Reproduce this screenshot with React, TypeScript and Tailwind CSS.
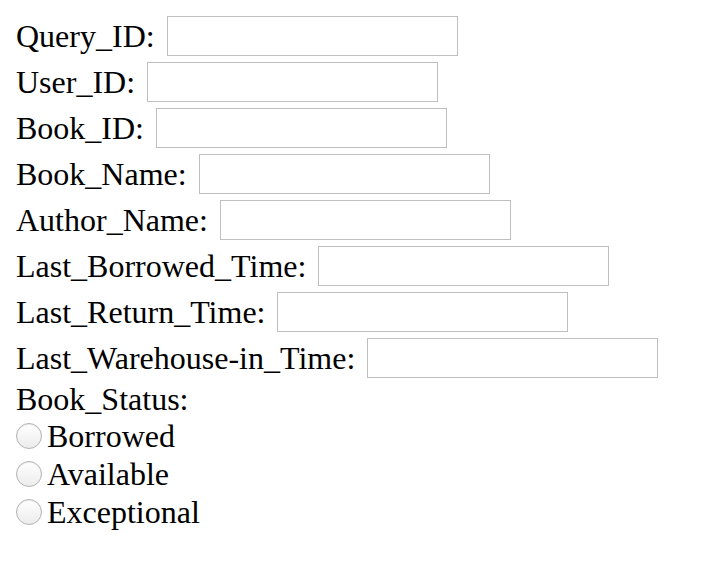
import React from "react"

const fields = [
  "Query_ID:",
  "User_ID:",
  "Book_ID:",
  "Book_Name:",
  "Author_Name:",
  "Last_Borrowed_Time:",
  "Last_Return_Time:",
  "Last_Warehouse-in_Time:",
]

const statuses = ["Borrowed", "Available", "Exceptional"]

export default function App() {
  return (
    <div
      className="min-h-[564px] bg-white pl-[16px] pt-[16px] text-[32px] leading-[36px] text-black"
      style={{ fontFamily: '"Liberation Serif", "Times New Roman", serif' }}
    >
      <form className="flex flex-col">
        {fields.map((f) => (
          <div key={f} className="mb-[6px] flex items-center">
            <label className="whitespace-nowrap">{f}</label>
            <input
              type="text"
              className="ml-[12px] h-[40px] w-[291px] border border-[#bfbfbf] bg-white outline-none"
            />
          </div>
        ))}
        <div className="-mt-[3px]">Book_Status:</div>
        <div className="flex flex-col">
          {statuses.map((s) => (
            <label key={s} className="flex h-[38px] items-center">
              <span className="mr-[5px] inline-block h-[26px] w-[26px] rounded-full border border-[#b3b3b3] bg-gradient-to-b from-[#ffffff] to-[#ececec] shadow-[inset_0_1px_1px_rgba(0,0,0,0.08)]" />
              {s}
            </label>
          ))}
        </div>
      </form>
    </div>
  )
}
